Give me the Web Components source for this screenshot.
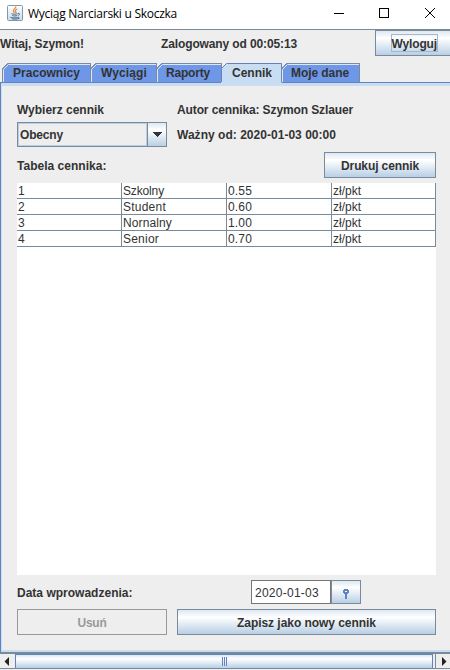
<!DOCTYPE html>
<html lang="pl">
<head>
<meta charset="utf-8">
<title>Wyciąg Narciarski u Skoczka</title>
<style>
html,body{margin:0;height:100%;overflow:hidden}
body{width:450px;height:670px;background:#eee;color:#333;font:bold 12px/16px "Liberation Sans",Arial,sans-serif}
</style>
</head>
<body>
<price-window></price-window>
<script>
function define(name, html, ready) {
  const tpl = document.createElement('template');
  tpl.innerHTML = html;
  customElements.define(name, class extends HTMLElement {
    constructor() {
      super();
      this.attachShadow({mode: 'open'}).append(tpl.content.cloneNode(true));
    }
    connectedCallback() { if (ready) ready.call(this, this.shadowRoot); }
  });
}

/* Text whose tracking is adjusted to a given advance width (attribute w). */
define('swing-label', `<style>
:host{display:inline-block;white-space:nowrap;flex:none}
span{display:inline-block;white-space:nowrap}
</style><span></span>`, function (root) {
  const s = root.querySelector('span');
  s.textContent = this.getAttribute('text');
  const w = parseFloat(this.getAttribute('w'));
  if (w) {
    const natural = s.getBoundingClientRect().width;
    s.style.letterSpacing = ((w - natural) / s.textContent.length).toFixed(3) + 'px';
  }
});

define('swing-button', `<style>
:host{display:flex;box-sizing:border-box;align-items:center;justify-content:center;border:1px solid #7a8a99;
background:linear-gradient(#dde8f3 0%,#fff 30%,#b8cfe5 100%);flex:none}
:host([disabled]){background:#eee;border-color:#999;color:#999}
::slotted(swing-label){padding-top:2px}
</style><slot></slot>`);

define('title-bar', `<style>
:host{display:flex;height:29px;background:#fff;border-bottom:1px solid #7a8a99;color:#000;align-items:center;font:12px/16px "Open Sans","Noto Sans",sans-serif}
.logo{margin:0 5px 3px 7px}
.ctl{margin-left:auto}
svg{display:block;flex:none}
swing-label{margin-bottom:2px}
</style>
<svg class="logo" width="16" height="16" viewBox="0 0 16 16"><defs><linearGradient id="g" x2="0" y2="1"><stop stop-color="#fff"/><stop offset="1" stop-color="#cbdbe7"/></linearGradient></defs>
<rect x=".5" y=".5" width="15" height="15" rx="1" fill="url(#g)" stroke="#7f99ad"/>
<path d="M8.700 1.500c.7 2-2.900 2.700-2.300 4.400.2.700 1 1.200 1.200 2M10.300 4c-2 .8-2.500 1.600-1.500 2.600.4.500.2 1-.2 1.400" fill="none" stroke="#e98231" stroke-width="1.200"/>
<path d="M4.500 8.700c1.500.7 4.500.6 6 0M5.300 10.500c1.400.6 3.600.6 4.900 0M11 8.500c2-.5 2 1.300.2 2M3.500 12c-.8 1 6.500 1.300 8.500 0M5 13.800c2.500.5 5 .4 7.500-.6" fill="none" stroke="#41698f"/></svg>
<swing-label text="Wyciąg Narciarski u Skoczka" w="149"></swing-label>
<svg class="ctl" width="117" height="29" viewBox="0 0 117 29" fill="none" stroke="#000" shape-rendering="crispEdges">
<path d="M1 13.500h10M46.500 8.500h9v9h-9z"/><path d="M92 8l10 10M102 8l-10 10" shape-rendering="auto"/></svg>`);

define('user-bar', `<style>
:host{display:flex;height:26px;overflow:hidden}
.hi{width:161px}
swing-label{margin-top:6px}
swing-button{width:79px;height:26px;margin-left:auto;margin-right:-4px}
.focus{border:1px solid #a3b8cc;width:45px;height:16px;display:flex}
.focus swing-label{margin:1px 0 0 -.5px}
</style><div class="hi"><swing-label text="Witaj, Szymon!" w="84"></swing-label></div>
<swing-label text="Zalogowany od 00:05:13" w="136"></swing-label>
<swing-button><div class="focus"><swing-label text="Wyloguj" w="45.5"></swing-label></div></swing-button>`);

define('tab-strip', `<style>
:host{display:flex;height:19px;padding:7px 0 0 2px;position:relative}
</style><slot></slot>`);

define('tab-item', `<style>
:host{display:block;height:19px;position:relative;margin-right:-1px;flex:none}
svg{display:block;position:absolute;left:0;top:0;overflow:visible}
.text{position:relative;padding:2px 0 0 var(--pad,11px)}
</style><svg height="20" fill="none"></svg><div class="text"><slot></slot></div>`, function (root) {
  const w = +this.getAttribute('width'), on = this.hasAttribute('selected');
  this.style.width = w + 'px';
  const svg = root.querySelector('svg'), b = on ? 22 : 19;
  svg.setAttribute('width', w);
  svg.innerHTML = `<path d="M0 ${b}V6L6 0H${w}V${b}Z" fill="${on ? '#c8ddf2' : '#6e97e8'}"/>
  <path d="M1.500 19V6.500L6.500 1.500H${w - 1}" stroke="${on ? '#c8ddf2' : '#dce6f7'}"/>
  <path d="M.5 19V5.500L5.500 .5H${w - .5}V19.500" stroke="${on ? '#6382bf' : '#7a8a99'}"/>`;
});

define('combo-box', `<style>
:host{display:flex;box-sizing:border-box;width:150px;height:25px;border:1px solid #7a8a99}
.v{box-sizing:border-box;width:129px;border:1px solid #b8cfe5;padding:3px 0 0 1px}
.a{flex:1;border-left:1px solid #7a8a99;background:linear-gradient(#dde8f3,#fff 30%,#b8cfe5)}
svg{display:block;margin:9px 0 0 4px}
</style><div class="v"><slot></slot></div><div class="a"><svg width="10" height="5" shape-rendering="crispEdges"><path d="M0 0h10L5 5z" fill="#333"/></svg></div>`);

define('price-table', `<style>
:host{display:block;width:419px;height:392px;background:#fff;font-weight:normal}
.grid{display:grid;grid-template-columns:105px 105px 105px 104px;grid-auto-rows:16px}
.grid>div{border-right:1px solid #7a8a99;border-bottom:1px solid #7a8a99;padding-left:1px;line-height:17px;height:15px}
</style><div class="grid"></div>`, function (root) {
  const rows = [['1','Szkolny','0.55'],['2','Student','0.60'],['3','Nornalny','1.00'],['4','Senior','0.70']];
  const w = {Szkolny:41, Student:43, Nornalny:49, Senior:36};
  root.querySelector('.grid').innerHTML = rows.map(r => [...r, 'zł/pkt'].map(t =>
    `<div><swing-label text="${t}" w="${w[t] || (t.length === 1 ? 7 : t.length === 4 ? 24 : 28)}"></swing-label></div>`).join('')).join('');
});

define('date-field', `<style>
:host{display:flex;height:24px;width:110px}
.in{box-sizing:border-box;width:80px;border:1px solid #777;background:#fff;font-weight:normal;padding:4px 0 0 3px}
swing-button{width:30px;height:24px}
svg{display:block;margin-top:3px}
</style><div class="in"><swing-label text="2020-01-03" w="64"></swing-label></div>
<swing-button><svg width="6" height="10" shape-rendering="crispEdges"><path d="M1 0h4v1h1v3H5v1H4v5H2V5H1V4H0V1h1z" fill="#6382bf"/><path d="M2 2h2v1H2z" fill="#fff"/></svg></swing-button>`);

define('price-panel', `<style>
:host{display:block;box-sizing:border-box;height:570px;border:solid #6382bf;border-width:1px 0 0 1px}
.body{box-sizing:border-box;height:569px;border:solid #c8ddf2;border-width:3px 0 2px 1px;padding:16px 14px 0 15px}
.top{display:grid;grid-template-columns:160px 1fr;grid-template-rows:20px 25px}
.r2{padding-top:5px}
.print{display:flex;justify-content:space-between;box-sizing:border-box;height:36px;padding-top:5px}
.print>swing-label{padding-top:6px}
.print swing-button{width:112px;height:26px}
.date{display:flex;height:29px;padding-top:5px}
.date>swing-label{width:234px;padding-top:5px}
.act{display:grid;grid-template-columns:150px 259px;gap:10px}
.act swing-button{height:26px}
</style><div class="body">
<div class="top"><swing-label text="Wybierz cennik" w="87"></swing-label><swing-label text="Autor cennika: Szymon Szlauer" w="176"></swing-label>
<combo-box><swing-label text="Obecny" w="43"></swing-label></combo-box><swing-label class="r2" text="Ważny od: 2020-01-03 00:00" w="159"></swing-label></div>
<div class="print"><swing-label text="Tabela cennika:" w="89.500"></swing-label><swing-button><swing-label text="Drukuj cennik" w="78"></swing-label></swing-button></div>
<price-table></price-table>
<div class="date"><swing-label text="Data wprowadzenia:" w="115.500"></swing-label><date-field></date-field></div>
<div class="act"><swing-button disabled><swing-label text="Usuń" w="29"></swing-label></swing-button><swing-button><swing-label text="Zapisz jako nowy cennik" w="139"></swing-label></swing-button></div>
</div>`);

define('scroll-bar', `<style>
:host{display:flex;box-sizing:border-box;height:17px;border:solid #7a8a99;border-width:2px 0 1px}
svg{display:block;flex:none}
.thumb{box-sizing:border-box;flex:1;border:1px solid #6382bf;border-bottom:0;background:linear-gradient(#dde8f3,#fff 30%,#b8cfe5);display:flex;justify-content:center;align-items:center}
.grip{margin-left:2px}
.gap{width:2px;border-right:1px solid #7a8a99}
</style><svg width="15" height="14"><path d="M9 3v9L4.500 7.500z" fill="#222"/></svg>
<div class="thumb"><svg class="grip" width="6" height="9" shape-rendering="crispEdges"><path d="M.5 0v9M2.500 0v9M4.500 0v9" stroke="#6382bf"/></svg></div><div class="gap"></div>
<svg width="14" height="14"><path d="M6 3v9L10.500 7.500z" fill="#222"/></svg>`);

define('price-window', `<style>
:host{display:flex;flex-direction:column;width:450px;height:670px;overflow:hidden;background:#eee}
tab-strip{z-index:1}
</style><title-bar></title-bar><user-bar></user-bar>
<tab-strip>
<tab-item width="89"><swing-label text="Pracownicy" w="67"></swing-label></tab-item>
<tab-item width="67"><swing-label text="Wyciągi" w="46"></swing-label></tab-item>
<tab-item width="66" style="--pad:10px"><swing-label text="Raporty" w="44"></swing-label></tab-item>
<tab-item width="61" selected><swing-label text="Cennik" w="40"></swing-label></tab-item>
<tab-item width="79" style="--pad:10px"><swing-label text="Moje dane" w="58"></swing-label></tab-item>
</tab-strip>
<price-panel></price-panel><scroll-bar></scroll-bar>`);
</script>
</body>
</html>
